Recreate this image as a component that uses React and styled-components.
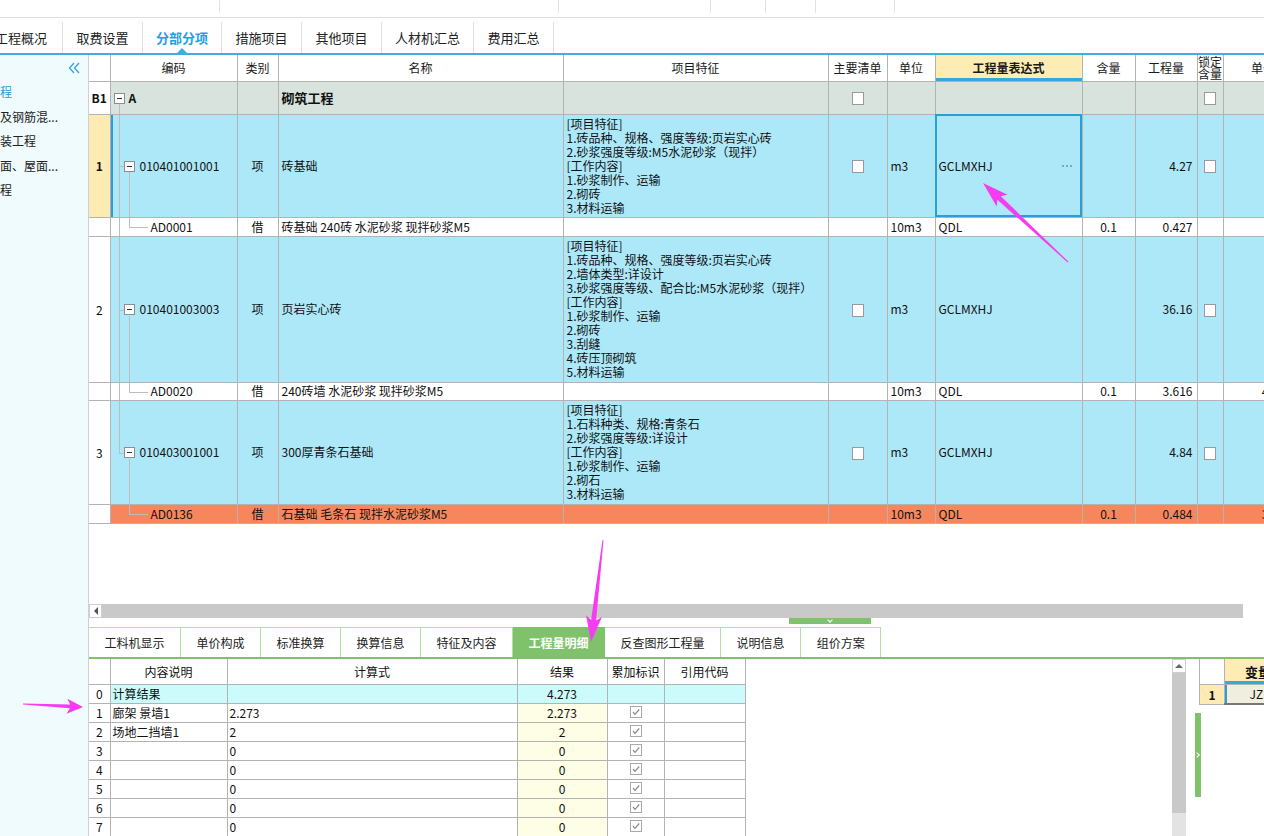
import React from "react";
import styled, { createGlobalStyle } from "styled-components";

const GlobalStyle = createGlobalStyle`
  html, body { margin: 0; padding: 0; background: #ffffff; }
  body {
    font-family: "Noto Sans CJK SC", "Noto Sans", "DejaVu Sans", sans-serif;
    font-size: 12px;
    color: #111;
  }
  * { box-sizing: border-box; }
`;

const GRID = "#b3b3b3";
const TREE = "#bdbdbd";
const BLUE_ROW = "#ade8f9";
const GROUP_ROW = "#d8e3de";
const ORANGE_ROW = "#f6875c";
const SEL_YELLOW = "#fdebb3";
const GREEN = "#7fc26b";
const PINK = "#f53cf2";

const features = {
  r1: [
    "[项目特征]",
    "1.砖品种、规格、强度等级:页岩实心砖",
    "2.砂浆强度等级:M5水泥砂浆（现拌）",
    "[工作内容]",
    "1.砂浆制作、运输",
    "2.砌砖",
    "3.材料运输",
  ],
  r2: [
    "[项目特征]",
    "1.砖品种、规格、强度等级:页岩实心砖",
    "2.墙体类型:详设计",
    "3.砂浆强度等级、配合比:M5水泥砂浆（现拌）",
    "[工作内容]",
    "1.砂浆制作、运输",
    "2.砌砖",
    "3.刮缝",
    "4.砖压顶砌筑",
    "5.材料运输",
  ],
  r3: [
    "[项目特征]",
    "1.石料种类、规格:青条石",
    "2.砂浆强度等级:详设计",
    "[工作内容]",
    "1.砂浆制作、运输",
    "2.砌石",
    "3.材料运输",
  ],
};

const items = [
  {
    no: "1", code: "010401001001", name: "砖基础", qty: "4.27", h: 103, selected: true, feature: features.r1,
    child: { code: "AD0001", name: "砖基础 240砖 水泥砂浆 现拌砂浆M5", qty: "0.427", price: "", h: 19 },
  },
  {
    no: "2", code: "010401003003", name: "页岩实心砖", qty: "36.16", h: 146, feature: features.r2,
    child: { code: "AD0020", name: "240砖墙 水泥砂浆 现拌砂浆M5", qty: "3.616", price: "410.45", h: 18 },
  },
  {
    no: "3", code: "010403001001", name: "300厚青条石基础", qty: "4.84", h: 104, feature: features.r3, last: true,
    child: { code: "AD0136", name: "石基础 毛条石 现拌水泥砂浆M5", qty: "0.484", price: "355.99", h: 19, hot: true },
  },
];

const detailRows = [
  { no: "0", desc: "计算结果", expr: "", result: "4.273", total: true },
  { no: "1", desc: "廊架 景墙1", expr: "2.273", result: "2.273" },
  { no: "2", desc: "场地二挡墙1", expr: "2", result: "2" },
  { no: "3", desc: "", expr: "0", result: "0" },
  { no: "4", desc: "", expr: "0", result: "0" },
  { no: "5", desc: "", expr: "0", result: "0" },
  { no: "6", desc: "", expr: "0", result: "0" },
  { no: "7", desc: "", expr: "0", result: "0" },
];

const topTabs = ["工程概况", "取费设置", "分部分项", "措施项目", "其他项目", "人材机汇总", "费用汇总"];
const topTabWidths = [63, 80, 79, 80, 80, 92, 80];
const bottomTabs = ["工料机显示", "单价构成", "标准换算", "换算信息", "特征及内容", "工程量明细", "反查图形工程量", "说明信息", "组价方案"];
const sideItems = ["程", "及钢筋混...", "装工程", "面、屋面...", "程"];

const billCols = [21, 127, 41, 285, 265, 59, 48, 147, 53, 62, 26, 80];
const detailCols = [21, 117, 290, 90, 57, 81];

// tree connector lines, drawn as background strips inside the code cell
const seg = (x, y, w, h) => `linear-gradient(${TREE}, ${TREE}) ${x}px ${y}px / ${w}px ${h}px no-repeat`;

function treeBg(kind, h, color) {
  const mid = Math.floor(h / 2);
  const parts = [];
  if (kind === "group") parts.push(seg(8, mid + 6, 1, h - mid - 6));
  if (kind === "item" || kind === "itemLast") {
    parts.push(seg(8, 0, 1, kind === "item" ? h : mid + 1));
    parts.push(seg(8, mid, 5, 1));
    parts.push(seg(18, mid + 6, 1, h - mid - 6));
  }
  if (kind === "child" || kind === "childLast") {
    if (kind === "child") parts.push(seg(8, 0, 1, h));
    parts.push(seg(18, 0, 1, mid));
    parts.push(seg(18, mid, 19, 1));
  }
  parts.push(color);
  return parts.join(", ");
}

const Page = styled.div`
  position: relative;
  width: 1264px;
  height: 836px;
  overflow: hidden;
  display: flex;
  flex-direction: column;
  background: #fff;
`;

const TopStrip = styled.div`
  display: flex;
  height: 18px;
  flex-shrink: 0;
  border-bottom: 1px solid #dcdcdc;
`;

const StripCell = styled.div`
  width: ${p => p.$w}px;
  height: 13px;
  border-right: 1px solid #e3e3e3;
`;

const TabBar = styled.div`
  display: flex;
  height: 37px;
  flex-shrink: 0;
  border-bottom: 2px solid #3daee0;
`;

const Tab = styled.div`
  position: relative;
  display: flex;
  justify-content: ${p => (p.$first ? "flex-end" : "center")};
  width: ${p => p.$w}px;
  margin-top: 4px;
  height: 31px;
  line-height: 31px;
  padding-right: ${p => (p.$first ? 15 : 0)}px;
  border-right: 1px solid #e0e0e0;
  font-size: 13px;
  white-space: nowrap;
  overflow: hidden;
  color: ${p => (p.$active ? "#1ba3e6" : "#222")};
  font-weight: ${p => (p.$active ? 700 : 400)};

  &::after {
    content: "";
    display: ${p => (p.$active ? "block" : "none")};
    position: absolute;
    bottom: 0;
    left: 50%;
    margin-left: -5px;
    border-left: 5px solid transparent;
    border-right: 5px solid transparent;
    border-bottom: 5px solid #3daee0;
  }
`;

const Body = styled.div`
  flex: 1;
  display: flex;
  min-height: 0;
`;

const Sidebar = styled.div`
  width: 89px;
  flex-shrink: 0;
  background: #effbfd;
  border-right: 1px solid #c9d2d5;
  display: flex;
  flex-direction: column;
`;

const SideHead = styled.div`
  height: 25px;
  display: flex;
  align-items: center;
  justify-content: flex-end;
  padding-right: 7px;
`;

const SideItem = styled.div`
  height: 24.5px;
  line-height: 24px;
  font-size: 12px;
  white-space: nowrap;
  color: ${p => (p.$current ? "#1b9fe0" : "#222")};
`;

const Main = styled.div`
  flex: 1;
  min-width: 0;
  display: flex;
  flex-direction: column;
`;

const TableArea = styled.div`
  height: 549px;
  flex-shrink: 0;
  overflow: hidden;
`;

const BillTable = styled.table`
  border-collapse: collapse;
  table-layout: fixed;
  width: ${billCols.reduce((a, b) => a + b, 0)}px;
`;

const Col = styled.col`
  width: ${p => p.$w}px;
`;

const HeadCell = styled.th`
  height: 26px;
  padding: 0;
  border: 1px solid ${GRID};
  border-top: none;
  border-left: ${p => (p.$first ? "none" : `1px solid ${GRID}`)};
  font-weight: ${p => (p.$focus ? 700 : 400)};
  font-size: 12px;
  line-height: ${p => (p.$tight ? "12px" : "14px")};
  color: #1a1a1a;
  text-align: center;
  white-space: nowrap;
  overflow: hidden;
  background: ${p => (p.$focus ? "#fdedb5" : "#fff")};
  box-shadow: ${p => (p.$focus ? "inset 0 -3px 0 #37a8dc" : "none")};
`;

const BodyRow = styled.tr`
  height: ${p => p.$h}px;
`;

const Cell = styled.td`
  padding: 0 ${p => (p.$align === "right" ? "4px" : "3px")};
  border: 1px solid ${GRID};
  background: ${p => p.$bg};
  text-align: ${p => p.$align || "left"};
  vertical-align: middle;
  font-weight: ${p => (p.$bold ? 700 : 400)};
  font-size: ${p => (p.$big ? "13px" : "12px")};
  line-height: 14px;
  white-space: nowrap;
  overflow: hidden;
  color: #111;
`;

const NoCell = styled.td`
  padding: 0;
  border: 1px solid ${GRID};
  border-left: none;
  background: ${p => (p.$sel ? SEL_YELLOW : "#fff")};
  text-align: center;
  vertical-align: middle;
  font-weight: ${p => (p.$bold ? 700 : 400)};
  font-size: 12px;
`;

const CodeCell = styled.td`
  padding: 0 0 0 ${p => p.$indent}px;
  border: 1px solid ${GRID};
  background: ${p => p.$layers};
  box-shadow: ${p => (p.$sel ? "inset 2px 0 0 #2a9fd6" : "none")};
  vertical-align: middle;
  white-space: nowrap;
  overflow: hidden;
  font-size: 12px;
  line-height: 14px;
  font-weight: ${p => (p.$bold ? 700 : 400)};
`;

const ExprCell = styled(Cell)`
  outline: ${p => (p.$sel ? "2px solid #2a9fd6" : "none")};
  outline-offset: -2px;
`;

/* the small "..." edit button inside the focused cell */
const Dots = styled.span`
  float: right;
  width: 11px;
  height: 2px;
  margin: 6px 7px 0 0;
  background: radial-gradient(circle, #7aa6c9 0.9px, transparent 1.1px) 0 0 / 4px 2px repeat-x;
`;

const Toggle = styled.span`
  display: inline-block;
  width: 11px;
  height: 11px;
  margin-right: ${p => p.$gap}px;
  border: 1px solid #8d8d8d;
  background: linear-gradient(#333, #333) center / 5px 1px no-repeat, #fff;
  vertical-align: -1px;
`;

const Check = styled.span`
  display: inline-block;
  width: 12px;
  height: 13px;
  border: 1px solid #9a9a9a;
  background: #fff;
  vertical-align: middle;
`;

const Feature = styled.div`
  font-size: 12px;
  line-height: 14px;
`;

const HScroll = styled.div`
  display: flex;
  height: 14px;
  flex-shrink: 0;
`;

const ScrollLeft = styled.div`
  width: 13px;
  display: flex;
  align-items: center;
  justify-content: center;
  background: #fff;
  border: 1px solid #cfcfcf;

  &::before {
    content: "";
    border-top: 4px solid transparent;
    border-bottom: 4px solid transparent;
    border-right: 4px solid #555;
  }
`;

const ScrollThumb = styled.div`
  flex: 1;
  background: #c9c9c9;
`;

const ScrollEnd = styled.div`
  width: 21px;
`;

const HandleRow = styled.div`
  height: 9px;
  flex-shrink: 0;
  padding-left: 700px;
`;

const Handle = styled.div`
  width: 82px;
  height: 6px;
  background: ${GREEN};
  display: flex;
  justify-content: center;

  &::before {
    content: "";
    width: 3px;
    height: 3px;
    border-right: 1px solid #fff;
    border-bottom: 1px solid #fff;
    transform: rotate(45deg);
  }
`;

const BottomTabBar = styled.div`
  display: flex;
  height: 32px;
  flex-shrink: 0;
  border-bottom: 2px solid ${GREEN};
`;

const BottomTab = styled.div`
  height: 30px;
  line-height: 29px;
  padding: 0 15.5px;
  border-top: 1px solid ${p => (p.$active ? GREEN : "#b3e0a2")};
  border-right: 1px solid ${p => (p.$active ? GREEN : "#b3e0a2")};
  background: ${p => (p.$active ? GREEN : "#fff")};
  color: ${p => (p.$active ? "#fff" : "#222")};
  font-weight: ${p => (p.$active ? 700 : 400)};
  font-size: 12px;
  white-space: nowrap;
`;

const BottomBody = styled.div`
  flex: 1;
  min-height: 0;
  display: flex;
`;

const DetailTable = styled.table`
  border-collapse: collapse;
  table-layout: fixed;
  width: ${detailCols.reduce((a, b) => a + b, 0)}px;
  align-self: flex-start;
`;

const DHead = styled.th`
  height: 25px;
  padding: 0;
  border: 1px solid ${GRID};
  border-top: none;
  border-left: ${p => (p.$first ? "none" : `1px solid ${GRID}`)};
  font-weight: 400;
  font-size: 12px;
  text-align: center;
  white-space: nowrap;
  background: #fff;
`;

const DRow = styled.tr`
  height: 19px;
`;

const DCell = styled.td`
  padding: 0 2px;
  border: 1px solid ${GRID};
  border-left: ${p => (p.$first ? "none" : `1px solid ${GRID}`)};
  background: ${p => p.$bg || "#fff"};
  text-align: ${p => p.$align || "left"};
  font-size: 12px;
  line-height: 14px;
  white-space: nowrap;
  overflow: hidden;
`;

const RightZone = styled.div`
  margin-left: auto;
  width: 92px;
  display: flex;
`;

const VScroll = styled.div`
  width: 14px;
  display: flex;
  flex-direction: column;
`;

const ScrollUp = styled.div`
  height: 14px;
  background: #fff;
  border: 1px solid #cfcfcf;
  display: flex;
  align-items: center;
  justify-content: center;

  &::before {
    content: "";
    border-left: 4px solid transparent;
    border-right: 4px solid transparent;
    border-bottom: 4px solid #666;
  }
`;

const VThumb = styled.div`
  height: 140px;
  background: #c9c9c9;
`;

const VTrack = styled.div`
  flex: 1;
  background: #e3e3e3;
`;

const Pane = styled.div`
  flex: 1;
  margin-left: 9px;
  overflow: hidden;
  display: flex;
  flex-direction: column;
`;

const MiniTable = styled.table`
  border-collapse: collapse;
  table-layout: fixed;
  width: 105px;
  margin-left: 4px;
`;

const MiniHead = styled.th`
  height: 25px;
  padding: 0;
  border: 1px solid ${GRID};
  border-top: none;
  border-left: ${p => (p.$corner ? `1px solid ${GRID}` : "none")};
  background: ${p => (p.$corner ? "#fff" : "#fdedb5")};
  box-shadow: ${p => (p.$corner ? "none" : "inset 0 -3px 0 #37a8dc")};
  font-size: 13px;
  font-weight: 700;
  text-align: center;
  white-space: nowrap;
`;

const MiniCell = styled.td`
  height: 20px;
  padding: 0;
  border: 1px solid ${GRID};
  border-bottom: ${p => (p.$value ? "2px solid #777" : `1px solid ${GRID}`)};
  background: ${p => (p.$value ? "#efeedf" : SEL_YELLOW)};
  box-shadow: ${p => (p.$value ? "inset 2px 0 0 #2a9fd6" : "none")};
  font-weight: ${p => (p.$value ? 400 : 700)};
  text-align: center;
  font-size: 12px;
  white-space: nowrap;
`;

const GreenBar = styled.div`
  margin-top: 8px;
  width: 6px;
  height: 84px;
  background: ${GREEN};
  display: flex;
  align-items: center;
  justify-content: center;

  &::before {
    content: "";
    width: 3px;
    height: 3px;
    border-top: 1px solid #fff;
    border-right: 1px solid #fff;
    transform: rotate(45deg);
    margin-left: -2px;
  }
`;

const Overlay = styled.svg`
  position: absolute;
  top: 0;
  left: 0;
  width: 1264px;
  height: 836px;
  pointer-events: none;
`;

const CollapseIcon = () => (
  <svg width="14" height="14" viewBox="0 0 14 14">
    <path d="M7 2 L2.5 7 L7 12 M12 2 L7.5 7 L12 12" fill="none" stroke="#36a2da" strokeWidth="1.3" />
  </svg>
);

const TickBox = () => (
  <svg width="12" height="12" viewBox="0 0 12 12">
    <rect x="0.5" y="0.5" width="11" height="11" fill="#fff" stroke="#a9a9a9" />
    <path d="M3 6 L5 8.3 L9.2 3.5" fill="none" stroke="#8a8a8a" strokeWidth="1.2" />
  </svg>
);

function ItemRows({ it }) {
  const bg = BLUE_ROW;
  const c = it.child;
  const cbg = c.hot ? ORANGE_ROW : "#fff";
  return (
    <>
      <BodyRow $h={it.h}>
        <NoCell $sel={it.selected} $bold={it.selected}>{it.no}</NoCell>
        <CodeCell $indent={13} $sel={it.selected} $layers={treeBg(it.last ? "itemLast" : "item", it.h, bg)}>
          <Toggle $gap={5} />
          {it.code}
        </CodeCell>
        <Cell $bg={bg} $align="center">项</Cell>
        <Cell $bg={bg}>{it.name}</Cell>
        <Cell $bg={bg}>
          {it.feature.map((f, i) => (
            <Feature key={i}>{f}</Feature>
          ))}
        </Cell>
        <Cell $bg={bg} $align="center"><Check /></Cell>
        <Cell $bg={bg}>m3</Cell>
        <ExprCell $bg={bg} $sel={it.selected}>
          GCLMXHJ
          {it.selected && <Dots />}
        </ExprCell>
        <Cell $bg={bg} />
        <Cell $bg={bg} $align="right">{it.qty}</Cell>
        <Cell $bg={bg} $align="center"><Check /></Cell>
        <Cell $bg={bg} />
      </BodyRow>
      <BodyRow $h={c.h}>
        <NoCell />
        <CodeCell $indent={40} $layers={treeBg(it.last ? "childLast" : "child", c.h, cbg)}>
          {c.code}
        </CodeCell>
        <Cell $bg={cbg} $align="center">借</Cell>
        <Cell $bg={cbg}>{c.name}</Cell>
        <Cell $bg={cbg} />
        <Cell $bg={cbg} />
        <Cell $bg={cbg}>10m3</Cell>
        <Cell $bg={cbg}>QDL</Cell>
        <Cell $bg={cbg} $align="center">0.1</Cell>
        <Cell $bg={cbg} $align="right">{c.qty}</Cell>
        <Cell $bg={cbg} />
        <Cell $bg={cbg} $align="right">{c.price}</Cell>
      </BodyRow>
    </>
  );
}

export default function App() {
  return (
    <Page>
      <GlobalStyle />
      <TopStrip>
        {[220, 339, 152, 55, 50, 79].map((w, i) => (
          <StripCell key={i} $w={w} />
        ))}
      </TopStrip>

      <TabBar>
        {topTabs.map((t, i) => (
          <Tab key={t} $first={i === 0} $active={t === "分部分项"} $w={topTabWidths[i]}>
            {t}
          </Tab>
        ))}
      </TabBar>

      <Body>
        <Sidebar>
          <SideHead>
            <CollapseIcon />
          </SideHead>
          {sideItems.map((s, i) => (
            <SideItem key={i} $current={i === 0}>{s}</SideItem>
          ))}
        </Sidebar>

        <Main>
          <TableArea>
            <BillTable>
              <colgroup>
                {billCols.map((w, i) => (
                  <Col key={i} $w={w} />
                ))}
              </colgroup>
              <thead>
                <tr>
                  <HeadCell $first />
                  <HeadCell>编码</HeadCell>
                  <HeadCell>类别</HeadCell>
                  <HeadCell>名称</HeadCell>
                  <HeadCell>项目特征</HeadCell>
                  <HeadCell>主要清单</HeadCell>
                  <HeadCell>单位</HeadCell>
                  <HeadCell $focus>工程量表达式</HeadCell>
                  <HeadCell>含量</HeadCell>
                  <HeadCell>工程量</HeadCell>
                  <HeadCell $tight>锁定<br />含量</HeadCell>
                  <HeadCell>单价</HeadCell>
                </tr>
              </thead>
              <tbody>
                <BodyRow $h={33}>
                  <NoCell $bold>B1</NoCell>
                  <CodeCell $indent={3} $bold $layers={treeBg("group", 33, GROUP_ROW)}>
                    <Toggle $gap={4} />A
                  </CodeCell>
                  <Cell $bg={GROUP_ROW} />
                  <Cell $bg={GROUP_ROW} $bold $big>砌筑工程</Cell>
                  <Cell $bg={GROUP_ROW} />
                  <Cell $bg={GROUP_ROW} $align="center"><Check /></Cell>
                  <Cell $bg={GROUP_ROW} />
                  <Cell $bg={GROUP_ROW} />
                  <Cell $bg={GROUP_ROW} />
                  <Cell $bg={GROUP_ROW} />
                  <Cell $bg={GROUP_ROW} $align="center"><Check /></Cell>
                  <Cell $bg={GROUP_ROW} />
                </BodyRow>
                {items.map(it => (
                  <ItemRows key={it.no} it={it} />
                ))}
              </tbody>
            </BillTable>
          </TableArea>

          <HScroll>
            <ScrollLeft />
            <ScrollThumb />
            <ScrollEnd />
          </HScroll>

          <HandleRow>
            <Handle />
          </HandleRow>

          <BottomTabBar>
            {bottomTabs.map(t => (
              <BottomTab key={t} $active={t === "工程量明细"}>{t}</BottomTab>
            ))}
          </BottomTabBar>

          <BottomBody>
            <DetailTable>
              <colgroup>
                {detailCols.map((w, i) => (
                  <Col key={i} $w={w} />
                ))}
              </colgroup>
              <thead>
                <tr>
                  <DHead $first />
                  <DHead>内容说明</DHead>
                  <DHead>计算式</DHead>
                  <DHead>结果</DHead>
                  <DHead>累加标识</DHead>
                  <DHead>引用代码</DHead>
                </tr>
              </thead>
              <tbody>
                {detailRows.map(r => {
                  const rowBg = r.total ? "#ccfbfb" : "#fff";
                  return (
                    <DRow key={r.no}>
                      <DCell $first $align="center">{r.no}</DCell>
                      <DCell $bg={rowBg}>{r.desc}</DCell>
                      <DCell $bg={rowBg}>{r.expr}</DCell>
                      <DCell $bg={r.total ? rowBg : "#fefde6"} $align="center">{r.result}</DCell>
                      <DCell $bg={rowBg} $align="center">{!r.total && <TickBox />}</DCell>
                      <DCell $bg={rowBg} />
                    </DRow>
                  );
                })}
              </tbody>
            </DetailTable>

            <RightZone>
              <VScroll>
                <ScrollUp />
                <VThumb />
                <VTrack />
              </VScroll>
              <Pane>
                <MiniTable>
                  <colgroup>
                    <Col $w={25} />
                    <Col $w={80} />
                  </colgroup>
                  <thead>
                    <tr>
                      <MiniHead $corner />
                      <MiniHead>变量名</MiniHead>
                    </tr>
                  </thead>
                  <tbody>
                    <tr>
                      <MiniCell>1</MiniCell>
                      <MiniCell $value>JZMJ</MiniCell>
                    </tr>
                  </tbody>
                </MiniTable>
                <GreenBar />
              </Pane>
            </RightZone>
          </BottomBody>
        </Main>
      </Body>

      <Overlay viewBox="0 0 1264 836">
        <polygon
          fill={PINK}
          points="983,183 1007.5,194.8 1000.8,196.2 1068.3,261.6 1067.7,262.4 997.4,199.8 996.7,206.6"
        />
        <polygon
          fill={PINK}
          points="591,642 586.1,615.3 591.1,619.9 602.5,539.9 603.5,540.1 596.1,620.5 601.9,617.1"
        />
        <polygon
          fill={PINK}
          points="83,707 66.6,713.7 69.9,708.3 23,704.5 23,703.5 70.1,704.4 67.4,698.7"
        />
      </Overlay>
    </Page>
  );
}
